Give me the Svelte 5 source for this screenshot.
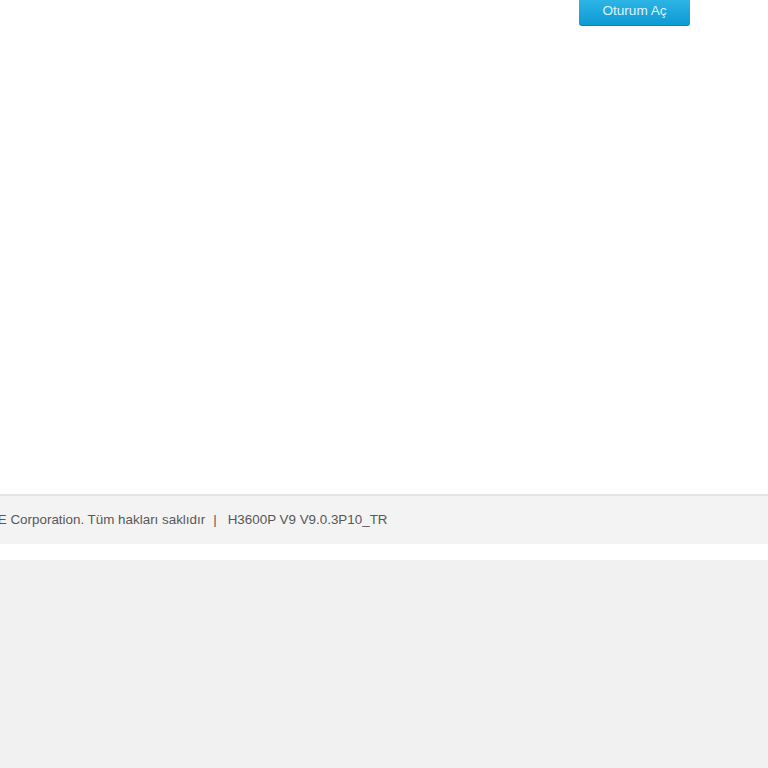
<script>
  let copyright = '© 2008-2023 ZTE Corporation. Tüm hakları saklıdır';
  let version = 'H3600P V9 V9.0.3P10_TR';
</script>

<div class="page">
  <main class="content">
    <div class="actions">
      <button class="login" type="button">Oturum Aç</button>
    </div>
  </main>

  <footer class="footer">
    <p class="info">
      <span>{copyright}</span>
      <span class="sep">|</span>
      <span>{version}</span>
    </p>
  </footer>

  <div class="gap"></div>
  <div class="below"></div>
</div>

<style>
  :global(body) {
    margin: 0;
    background: #fff;
  }

  .page {
    height: 768px;
    overflow: hidden;
    display: flex;
    flex-direction: column;
    font-family: "Liberation Sans", Arial, sans-serif;
  }

  .content {
    height: 494px;
    flex: none;
    background: #fff;
  }

  .actions {
    display: flex;
    justify-content: flex-end;
    padding-right: 78px;
  }

  .login {
    width: 111px;
    height: 26px;
    padding: 0 0 4px;
    border: 0;
    border-radius: 0 0 3px 3px;
    background: linear-gradient(#2db4e6, #0d9ad2);
    border-bottom: 1px solid #0b86ba;
    color: #dff3fb;
    font-family: inherit;
    font-size: 13.6px;
  }

  .footer {
    height: 50px;
    flex: none;
    display: flex;
    align-items: center;
    box-sizing: border-box;
    padding-bottom: 2px;
    border-top: 2px solid #e4e4e4;
    background: #f3f3f3;
  }

  .info {
    margin: 0;
    width: 387.5px;
    display: flex;
    justify-content: flex-end;
    gap: 8px;
    white-space: nowrap;
    font-size: 13.4px;
    color: #585858;
  }

  .sep {
    margin-right: 3px;
  }

  .gap {
    height: 16px;
    flex: none;
  }

  .below {
    flex: 1;
    background: #f1f1f1;
  }
</style>
